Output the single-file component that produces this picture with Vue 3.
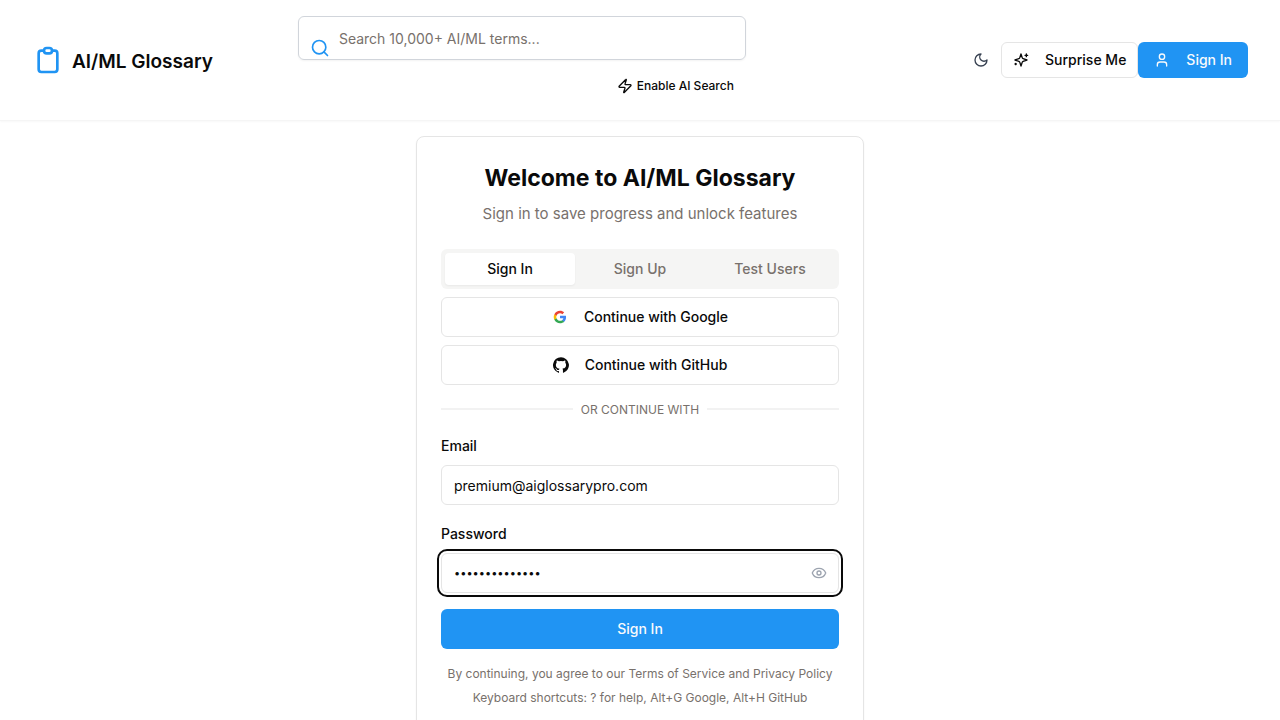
<script setup>
import { ref } from 'vue'

const query = ref('')
const email = ref('premium@aiglossarypro.com')
const password = ref('premiumpass123')
const tabs = ['Sign In', 'Sign Up', 'Test Users']
const activeTab = ref('Sign In')
</script>

<template>
  <div class="page">
    <header class="header">
      <a class="brand" href="#">
        <svg class="brand-icon" viewBox="0 0 24 24" aria-hidden="true">
          <path d="M9 5H7a2 2 0 00-2 2v12a2 2 0 002 2h10a2 2 0 002-2V7a2 2 0 00-2-2h-2M9 5a2 2 0 002 2h2a2 2 0 002-2M9 5a2 2 0 012-2h2a2 2 0 012 2" />
        </svg>
        <span class="brand-name">AI/ML Glossary</span>
      </a>

      <div class="search">
        <div class="search-box">
          <input v-model="query" class="search-input" type="text" placeholder="Search 10,000+ AI/ML terms..." aria-label="Search terms" />
          <svg class="search-icon" viewBox="0 0 24 24" aria-hidden="true">
            <circle cx="11" cy="11" r="8" />
            <path d="m21 21-4.3-4.3" />
          </svg>
        </div>
        <button class="ai-toggle" type="button">
          <svg class="icon" viewBox="0 0 24 24" aria-hidden="true">
            <path d="M4 14a1 1 0 0 1-.78-1.63l9.9-10.2a.5.5 0 0 1 .86.46l-1.92 6.02A1 1 0 0 0 13 10h7a1 1 0 0 1 .78 1.63l-9.9 10.2a.5.5 0 0 1-.86-.46l1.92-6.02A1 1 0 0 0 11 14z" />
          </svg>
          <span>Enable AI Search</span>
        </button>
      </div>

      <div class="actions">
        <button class="theme" type="button" aria-label="Toggle theme">
          <svg class="icon" viewBox="0 0 24 24" aria-hidden="true">
            <path d="M12 3a6 6 0 0 0 9 9 9 9 0 1 1-9-9Z" />
          </svg>
        </button>
        <button class="btn outline surprise" type="button">
          <svg class="icon" viewBox="0 0 24 24" aria-hidden="true">
            <path d="m12 3-1.912 5.813a2 2 0 0 1-1.275 1.275L3 12l5.813 1.912a2 2 0 0 1 1.275 1.275L12 21l1.912-5.813a2 2 0 0 1 1.275-1.275L21 12l-5.813-1.912a2 2 0 0 1-1.275-1.275L12 3Z" />
            <path d="M20 3v4M22 5h-4M4 17v2M5 18H3" />
          </svg>
          <span>Surprise Me</span>
        </button>
        <button class="btn primary account" type="button">
          <svg class="icon" viewBox="0 0 24 24" aria-hidden="true">
            <path d="M19 21v-2a4 4 0 0 0-4-4H9a4 4 0 0 0-4 4v2" />
            <circle cx="12" cy="7" r="4" />
          </svg>
          <span>Sign In</span>
        </button>
      </div>
    </header>

    <main class="main">
      <section class="card">
        <h1 class="title">Welcome to AI/ML Glossary</h1>
        <p class="subtitle">Sign in to save progress and unlock features</p>

        <div class="tabs" role="tablist">
          <button
            v-for="tab in tabs"
            :key="tab"
            class="tab"
            :class="{ active: tab === activeTab }"
            type="button"
            role="tab"
            :aria-selected="tab === activeTab"
            @click="activeTab = tab"
          >{{ tab }}</button>
        </div>

        <div class="providers">
          <button class="btn outline tall" type="button">
            <svg class="logo" viewBox="-2 -2 28 28" aria-hidden="true">
              <path fill="#4285F4" d="M22.56 12.25c0-.78-.07-1.53-.2-2.25H12v4.26h5.92c-.26 1.37-1.04 2.53-2.21 3.31v2.77h3.57c2.08-1.92 3.28-4.74 3.28-8.09z" />
              <path fill="#34A853" d="M12 23c2.97 0 5.46-.98 7.28-2.66l-3.57-2.77c-.98.66-2.23 1.06-3.71 1.06-2.86 0-5.29-1.93-6.16-4.53H2.18v2.84C3.99 20.53 7.7 23 12 23z" />
              <path fill="#FBBC05" d="M5.84 14.09c-.22-.66-.35-1.36-.35-2.09s.13-1.43.35-2.09V7.07H2.18C1.43 8.55 1 10.22 1 12s.43 3.45 1.18 4.93l3.66-2.84z" />
              <path fill="#EA4335" d="M12 5.38c1.62 0 3.06.56 4.21 1.64l3.15-3.15C17.45 2.09 14.97 1 12 1 7.7 1 3.99 3.47 2.18 7.07l3.66 2.84c.87-2.6 3.3-4.53 6.16-4.53z" />
            </svg>
            <span>Continue with Google</span>
          </button>
          <button class="btn outline tall" type="button">
            <svg class="logo" viewBox="0 0 24 24" aria-hidden="true">
              <path fill="#0a0a0a" d="M12 .3a12 12 0 0 0-3.8 23.38c.6.12.83-.26.83-.57L9 21.07c-3.34.72-4.04-1.61-4.04-1.61-.55-1.39-1.34-1.76-1.34-1.76-1.08-.74.09-.73.09-.73 1.2.09 1.83 1.24 1.83 1.24 1.08 1.83 2.81 1.3 3.5 1 .1-.78.42-1.31.76-1.61-2.67-.3-5.47-1.33-5.47-5.93 0-1.31.47-2.38 1.24-3.22-.14-.3-.54-1.52.1-3.18 0 0 1-.32 3.3 1.23a11.5 11.5 0 0 1 6 0c2.28-1.55 3.29-1.23 3.29-1.23.64 1.66.24 2.88.12 3.18a4.65 4.65 0 0 1 1.23 3.22c0 4.61-2.8 5.63-5.48 5.92.42.36.81 1.1.81 2.22l-.01 3.29c0 .31.2.69.82.57A12 12 0 0 0 12 .3" />
            </svg>
            <span>Continue with GitHub</span>
          </button>
        </div>

        <div class="divider"><span class="divider-text">OR CONTINUE WITH</span></div>

        <form class="form" @submit.prevent>
          <label class="label" for="email">Email</label>
          <input id="email" v-model="email" class="field" type="email" autocomplete="off" />
          <label class="label" for="password">Password</label>
          <div class="password">
            <input id="password" v-model="password" class="field focused" type="password" autocomplete="off" />
            <button class="reveal" type="button" aria-label="Show password">
              <svg class="icon" viewBox="0 0 24 24" aria-hidden="true">
                <path d="M2.06 12.35a1 1 0 0 1 0-.7 10.75 10.75 0 0 1 19.88 0 1 1 0 0 1 0 .7 10.75 10.75 0 0 1-19.88 0" />
                <circle cx="12" cy="12" r="3" />
              </svg>
            </button>
          </div>
          <button class="btn primary tall submit" type="submit">Sign In</button>
        </form>

        <div class="notes">
          <p>By continuing, you agree to our Terms of Service and Privacy Policy</p>
          <p>Keyboard shortcuts: ? for help, Alt+G Google, Alt+H GitHub</p>
        </div>
      </section>
    </main>
  </div>
</template>

<style>
body {
  background: #fff;
  overflow: hidden;
}
</style>

<style scoped>
.page,
.page * {
  box-sizing: border-box;
}
.page {
  color: #0a0a0a;
  font-family: Inter, "Liberation Sans", sans-serif;
  font-size: 14px;
  line-height: 20px;
}
button,
input {
  margin: 0;
  padding: 0;
  border: 0;
  background: none;
  color: inherit;
  font: inherit;
}
h1,
p {
  margin: 0;
}
.icon,
.search-icon,
.brand-icon {
  flex: none;
  fill: none;
  stroke: currentColor;
  stroke-width: 2;
  stroke-linecap: round;
  stroke-linejoin: round;
}
.icon,
.logo {
  display: block;
  flex: none;
  width: 16px;
  height: 16px;
}
.header {
  display: flex;
  align-items: center;
  padding: 16px 32px;
  border-bottom: 1px solid #f5f5f5;
  box-shadow: 0 1px 2px rgba(0, 0, 0, 0.03);
}
.brand {
  display: flex;
  align-items: center;
  gap: 8px;
  color: inherit;
  font-size: 19px;
  font-weight: 600;
  line-height: 28px;
  text-decoration: none;
  white-space: nowrap;
}
.brand-name {
  padding-top: 4px;
}
.brand-icon {
  width: 32px;
  height: 32px;
  color: #2094f3;
}
.search {
  display: flex;
  flex: 1;
  flex-direction: column;
  align-items: flex-end;
  gap: 8px;
  max-width: 448px;
  margin-left: 85px;
}
.search-box {
  position: relative;
  width: 100%;
}
.search-input {
  display: block;
  width: 100%;
  height: 44px;
  padding: 0 16px 0 40px;
  border: 1px solid #d1d5db;
  border-radius: 6px;
  box-shadow: 0 1px 2px rgba(0, 0, 0, 0.05);
}
.search-input::placeholder {
  color: #78716c;
  opacity: 1;
}
.search-icon {
  position: absolute;
  bottom: 2px;
  left: 12px;
  width: 20px;
  height: 20px;
  color: #2094f3;
}
.ai-toggle {
  display: flex;
  align-items: center;
  gap: 4px;
  height: 36px;
  padding: 0 12px;
  font-size: 12px;
  font-weight: 500;
}
.actions {
  display: flex;
  align-items: center;
  margin-left: auto;
}
.theme {
  display: flex;
  align-items: center;
  justify-content: center;
  width: 40px;
  height: 40px;
  color: #374151;
}
.btn {
  display: flex;
  align-items: center;
  justify-content: center;
  gap: 16px;
  height: 36px;
  border-radius: 6px;
  font-weight: 500;
  white-space: nowrap;
}
.outline {
  border: 1px solid #e5e5e5;
}
.primary {
  background: #2094f3;
  color: #f8fafc;
}
.surprise {
  padding: 0 11px;
}
.account {
  padding: 0 16px;
}
.tall {
  width: 100%;
  height: 40px;
}
.main {
  display: flex;
  justify-content: center;
  padding: 15px 16px;
}
.card {
  width: 100%;
  max-width: 448px;
  padding: 24px;
  border: 1px solid #e5e5e5;
  border-radius: 8px;
  box-shadow: 0 1px 2px rgba(0, 0, 0, 0.05);
}
.title {
  font-size: 23px;
  font-weight: 700;
  line-height: 34px;
  text-align: center;
}
.subtitle {
  margin-top: 7px;
  color: #78716c;
  font-size: 15px;
  line-height: 24px;
  text-align: center;
}
.tabs {
  display: grid;
  grid-template-columns: repeat(3, 1fr);
  height: 40px;
  margin-top: 23px;
  padding: 4px;
  border-radius: 6px;
  background: #f5f5f4;
}
.tab {
  border-radius: 4px;
  color: #78716c;
  font-weight: 500;
}
.tab.active {
  background: #fff;
  color: #0a0a0a;
  box-shadow: 0 1px 2px rgba(0, 0, 0, 0.05);
}
.providers {
  display: grid;
  gap: 8px;
  margin-top: 8px;
}
.divider {
  display: flex;
  align-items: center;
  gap: 8px;
  margin-top: 15px;
  color: #78716c;
  font-size: 12px;
  line-height: 16px;
}
.divider-text {
  padding-top: 2px;
}
.divider::before,
.divider::after {
  flex: 1;
  height: 2px;
  background: #f2f2f2;
  content: "";
}
.form {
  display: grid;
  margin-top: 18px;
}
.label {
  margin-bottom: 9px;
  font-weight: 500;
}
.field {
  display: block;
  width: 100%;
  height: 40px;
  padding: 0 12px;
  border: 1px solid #e5e5e5;
  border-radius: 6px;
}
#email {
  margin-bottom: 19px;
}
#password {
  font-size: 11px;
}
.password {
  position: relative;
}
.focused,
.focused:focus {
  outline: 2px solid #0a0a0a;
  outline-offset: 2px;
}
.reveal {
  position: absolute;
  top: 0;
  right: 0;
  display: flex;
  align-items: center;
  height: 40px;
  padding: 0 12px;
  color: #9ca3af;
}
.submit {
  margin-top: 16px;
}
.notes {
  display: grid;
  gap: 8px;
  margin-top: 17px;
  color: #78716c;
  font-size: 12px;
  line-height: 16px;
  text-align: center;
}
</style>
